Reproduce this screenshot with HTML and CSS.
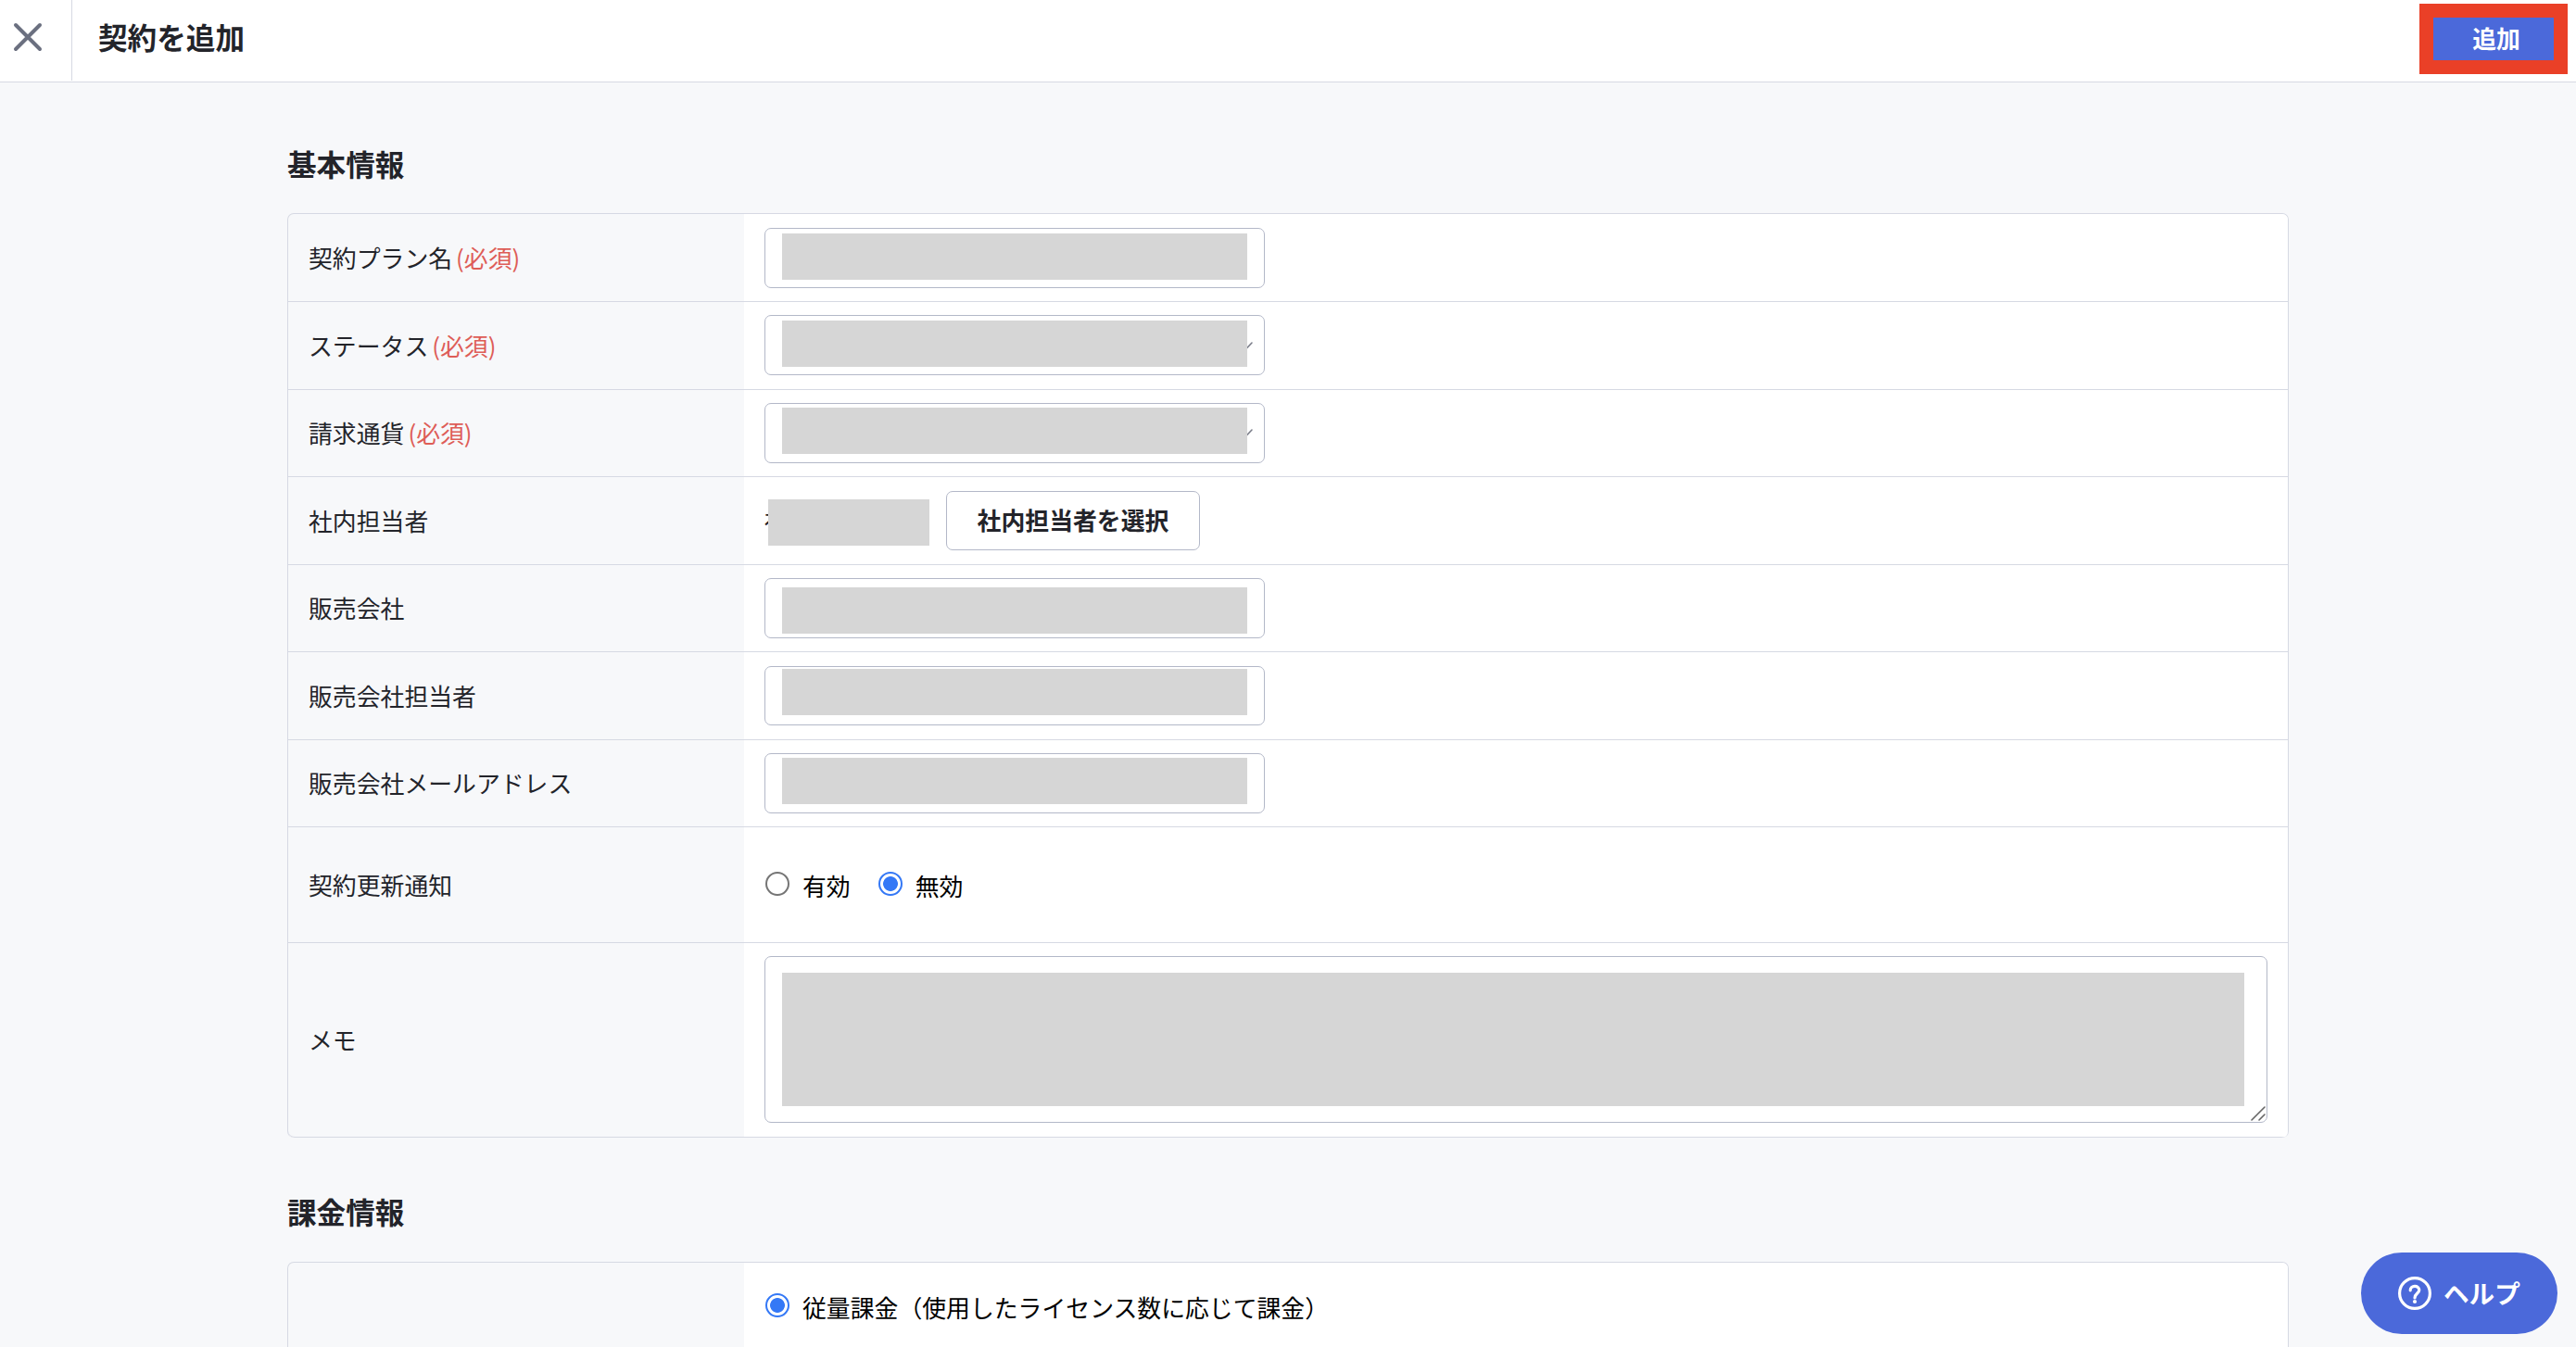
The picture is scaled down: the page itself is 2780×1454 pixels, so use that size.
FILE: index.html
```html
<!DOCTYPE html>
<html lang="ja">
<head>
    <meta charset="UTF-8">
    <title>契約を追加</title>
    <link rel="stylesheet" href="styles.css">
</head>
<body>

    <header class="header">
        <a class="close">
            <svg width="32" height="32" viewBox="0 0 32 32">
                <path d="M3 3 L29 29 M29 3 L3 29" />
            </svg>
        </a>
        <h1>契約を追加</h1>
        <button class="add-btn">追加</button>
    </header>

    <main class="main">
        <h2>基本情報</h2>
        <div class="table">
            <div class="row">
                <div class="label">契約プラン名<span class="required">(必須)</span></div>
                <div class="value low"><div class="field"><div class="mask top-5"></div></div></div>
            </div>
            <div class="row">
                <div class="label">ステータス<span class="required">(必須)</span></div>
                <div class="value">
                    <div class="field">
                        <svg class="chevron" width="22" height="14" viewBox="0 0 22 14"><path d="M1 2 L11 12.5 L21 2" /></svg>
                        <div class="mask top-5"></div>
                    </div>
                </div>
            </div>
            <div class="row short">
                <div class="label">請求通貨<span class="required">(必須)</span></div>
                <div class="value">
                    <div class="field">
                        <svg class="chevron up" width="22" height="14" viewBox="0 0 22 14"><path d="M1 2 L11 12.5 L21 2" /></svg>
                        <div class="mask top-4"></div>
                    </div>
                </div>
            </div>
            <div class="row">
                <div class="label">社内担当者</div>
                <div class="value low">
                    <div class="person">社<span class="person-mask"></span></div>
                    <button class="select-btn">社内担当者を選択</button>
                </div>
            </div>
            <div class="row short">
                <div class="label">販売会社</div>
                <div class="value"><div class="field"><div class="mask top-10"></div></div></div>
            </div>
            <div class="row">
                <div class="label">販売会社担当者</div>
                <div class="value low"><div class="field field-short"><div class="mask top-3"></div></div></div>
            </div>
            <div class="row short">
                <div class="label">販売会社メールアドレス</div>
                <div class="value"><div class="field"><div class="mask top-4"></div></div></div>
            </div>
            <div class="row row-radio">
                <div class="label">契約更新通知</div>
                <div class="value radios">
                    <label class="radio"><span class="dot"></span>有効</label>
                    <label class="radio"><span class="dot checked"></span>無効</label>
                </div>
            </div>
            <div class="row row-memo">
                <div class="label">メモ</div>
                <div class="value">
                    <div class="memo">
                        <div class="memo-mask"></div>
                        <svg class="resize" width="16" height="16" viewBox="0 0 16 16"><path d="M1 15 L15 1 M9 15 L15 9" /></svg>
                    </div>
                </div>
            </div>
        </div>

        <h2 class="second">課金情報</h2>
        <div class="table billing">
            <div class="row">
                <div class="label"></div>
                <div class="value radios">
                    <label class="radio"><span class="dot checked"></span>従量課金（使用したライセンス数に応じて課金）</label>
                </div>
            </div>
        </div>
    </main>

    <button class="help">
        <svg width="36" height="36" viewBox="0 0 36 36">
            <circle cx="18" cy="18" r="16.4" />
            <path d="M13.2 14.8 C13.2 8.9 22.8 8.9 22.8 14.6 C22.8 18 18 18.2 18 23" />
            <circle class="point" cx="18" cy="27" r="2.1" />
        </svg>
        <span>ヘルプ</span>
    </button>

</body>
</html>
```
FILE: styles.css
```css
* {
    box-sizing: border-box;
}

body {
    margin: 0;
    background-color: #f7f8fa;
    color: #23242a;
    font-family: "Noto Sans CJK JP", sans-serif;
    font-size: 25.85px;
}

button {
    font-family: inherit;
    font-size: inherit;
    font-weight: bold;
    padding: 0;
}

svg {
    fill: none;
    stroke-linecap: round;
}

.header {
    display: flex;
    height: 89px;
    background-color: white;
    border-bottom: 1px solid #d6d9e3;
}

.close {
    width: 78px;
    height: 87px;
    padding: 24px 0 0 14px;
    border-right: 1px solid #d6d9e3;
}

.close svg {
    display: block;
    stroke: #6b7080;
    stroke-width: 4;
}

h1 {
    margin: 0 auto 0 28px;
    font-size: 31.6px;
    line-height: 79px;
}

.add-btn {
    width: 160px;
    height: 76px;
    margin: 4px 9px 0 0;
    padding: 0 0 3px 6px;
    border: 15px solid #ea4027;
    background-color: #4b69da;
    color: white;
    line-height: 42px;
}

.main {
    width: 2160px;
    margin: 0 auto;
    padding-top: 63px;
}

h2 {
    margin: 0 0 30px;
    font-size: 31.6px;
    line-height: 48px;
}

h2.second {
    margin: 55px 0 31px;
}

.table {
    border: 1px solid #d6d9e3;
    border-bottom: none;
    border-radius: 7px;
    overflow: hidden;
}

.row {
    display: flex;
    height: 95px;
    border-bottom: 1px solid #d6d9e3;
}

.row.short {
    height: 94px;
}

.row:last-child {
    border-radius: 0 0 7px 7px;
}

.row-radio {
    height: 125px;
}

.row-memo {
    height: 210px;
}

.label {
    display: flex;
    align-items: center;
    width: 492px;
    padding: 0 0 2px 22px;
}

.required {
    margin-left: 4px;
    color: #de5d57;
}

.value {
    display: flex;
    flex: 1;
    align-items: flex-start;
    padding: 14px 22px 0;
    background-color: white;
}

.value.low {
    padding-top: 15px;
}

.field {
    position: relative;
    width: 540px;
    height: 65px;
    padding-left: 17.5px;
    border: 1px solid #b3b8c8;
    border-radius: 7px;
}

.field-short {
    height: 64px;
}

.mask {
    position: relative;
    width: 502px;
    height: 50px;
    background-color: #d6d6d6;
}

.top-3 {
    margin-top: 2px;
}

.top-4 {
    margin-top: 4px;
}

.top-5 {
    margin-top: 4.5px;
}

.top-10 {
    margin-top: 9px;
}

.chevron {
    position: absolute;
    top: 27px;
    right: 12px;
    stroke: #7b7e8a;
    stroke-width: 1.6;
}

.chevron.up {
    top: 26px;
}

.person {
    position: relative;
    width: 196px;
    line-height: 62px;
}

/* covers the name */
.person-mask {
    position: absolute;
    top: 9px;
    left: 4px;
    width: 174px;
    height: 50px;
    background-color: #d6d6d6;
}

.select-btn {
    width: 274px;
    height: 64px;
    padding-bottom: 3px;
    border: 1px solid #b3b8c8;
    border-radius: 7px;
    background-color: white;
    color: #23242a;
}

.radios {
    gap: 30px;
    padding-top: 44px;
    padding-left: 23px;
    color: black;
}

.radio {
    display: flex;
    line-height: 38px;
}

.dot {
    width: 26px;
    height: 26px;
    margin: 4px 14px 0 0;
    border: 2px solid #757575;
    border-radius: 50%;
}

.dot.checked {
    border-color: #3478f6;
    background: radial-gradient(circle, #3478f6 7.5px, white 8.3px);
}

/* continues below the window edge */
.table.billing {
    border-radius: 7px 7px 0 0;
}

.billing .row {
    height: 91px;
    border-bottom: none;
    border-radius: 0;
}

.billing .radios {
    padding-top: 29px;
}

.billing .radio {
    line-height: 37px;
}

.memo {
    position: relative;
    width: 1622px;
    height: 180px;
    padding: 17px 0 0 17.5px;
    border: 1px solid #b3b8c8;
    border-radius: 7px;
}

.memo-mask {
    width: 1578px;
    height: 144px;
    background-color: #d6d6d6;
}

.resize {
    position: absolute;
    right: 1px;
    bottom: 1px;
    stroke: #666;
    stroke-width: 1.6;
}

.help {
    position: fixed;
    right: 20px;
    bottom: 14px;
    display: flex;
    align-items: center;
    gap: 13px;
    width: 212px;
    height: 88px;
    padding-left: 40px;
    border: none;
    border-radius: 44px;
    background-color: #4b69da;
    color: white;
    font-size: 27.6px;
}

.help span {
    padding-bottom: 3px;
}

.help svg {
    stroke: white;
    stroke-width: 3.2;
}

.help .point {
    fill: white;
    stroke: none;
}
```
